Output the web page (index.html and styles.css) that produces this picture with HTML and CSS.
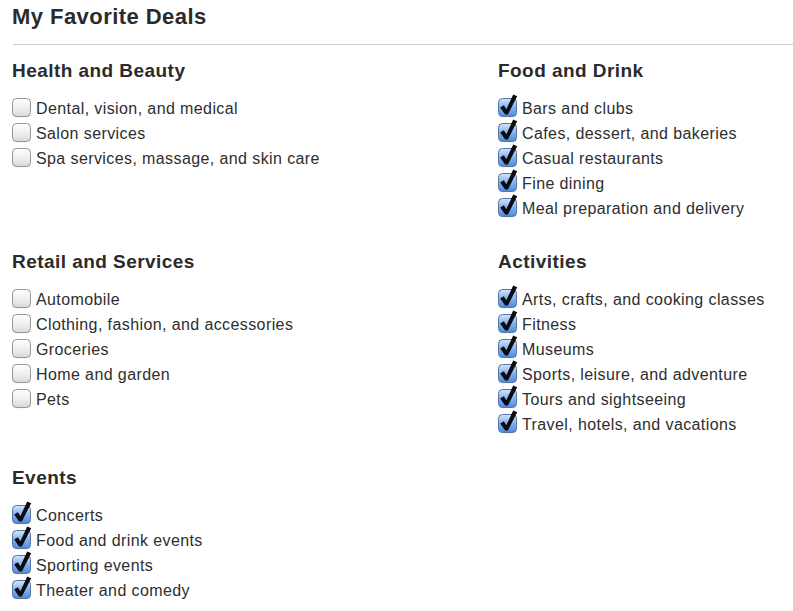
FILE: index.html
```html
<!DOCTYPE html>
<html>
<head>
<meta charset="utf-8">
<link rel="stylesheet" href="styles.css">
</head>
<body>
<svg width="0" height="0" class="defs" aria-hidden="true">
  <defs>
    <linearGradient id="gOff" x1="0" y1="0" x2="0" y2="1">
      <stop offset="0" stop-color="#ffffff"/>
      <stop offset="0.5" stop-color="#f0f0f0"/>
      <stop offset="1" stop-color="#d8d8d8"/>
    </linearGradient>
    <linearGradient id="gOn" x1="0" y1="0" x2="0" y2="1">
      <stop offset="0" stop-color="#d4e6fc"/>
      <stop offset="0.45" stop-color="#8ab6ef"/>
      <stop offset="1" stop-color="#4a8ae0"/>
    </linearGradient>
    <symbol id="off" viewBox="0 0 19 19" overflow="visible">
      <rect x="0.5" y="1.2" width="18" height="18" rx="4" fill="#000" opacity="0.1"/>
      <rect x="0.5" y="0.5" width="18" height="18" rx="4" fill="url(#gOff)" stroke="#959595"/>
    </symbol>
    <symbol id="on" viewBox="0 0 19 19" overflow="visible">
      <rect x="0.5" y="1.2" width="18" height="18" rx="4" fill="#000" opacity="0.12"/>
      <rect x="0.5" y="0.5" width="18" height="18" rx="4" fill="url(#gOn)" stroke="#5874a4"/>
      <path d="M2.2 9.6 L5.8 7.2 L8.4 11.2 L15.2 -3.6 L19.2 -1.8 L9.9 16.4 L7.1 16.4 Z" fill="#0b0b10"/>
    </symbol>
  </defs>
</svg>
<div class="page">
  <h1 class="title">My Favorite Deals</h1>
  <div class="rule"></div>
  <div class="grid">
    <section class="group">
      <h2 class="heading">Health and Beauty</h2>
      <ul class="list">
        <li class="item"><svg class="box" viewBox="0 0 19 19"><use href="#off"/></svg>Dental, vision, and medical</li>
        <li class="item"><svg class="box" viewBox="0 0 19 19"><use href="#off"/></svg>Salon services</li>
        <li class="item"><svg class="box" viewBox="0 0 19 19"><use href="#off"/></svg>Spa services, massage, and skin care</li>
      </ul>
    </section>
    <section class="group">
      <h2 class="heading">Food and Drink</h2>
      <ul class="list">
        <li class="item"><svg class="box" viewBox="0 0 19 19"><use href="#on"/></svg>Bars and clubs</li>
        <li class="item"><svg class="box" viewBox="0 0 19 19"><use href="#on"/></svg>Cafes, dessert, and bakeries</li>
        <li class="item"><svg class="box" viewBox="0 0 19 19"><use href="#on"/></svg>Casual restaurants</li>
        <li class="item"><svg class="box" viewBox="0 0 19 19"><use href="#on"/></svg>Fine dining</li>
        <li class="item"><svg class="box" viewBox="0 0 19 19"><use href="#on"/></svg>Meal preparation and delivery</li>
      </ul>
    </section>
    <section class="group">
      <h2 class="heading">Retail and Services</h2>
      <ul class="list">
        <li class="item"><svg class="box" viewBox="0 0 19 19"><use href="#off"/></svg>Automobile</li>
        <li class="item"><svg class="box" viewBox="0 0 19 19"><use href="#off"/></svg>Clothing, fashion, and accessories</li>
        <li class="item"><svg class="box" viewBox="0 0 19 19"><use href="#off"/></svg>Groceries</li>
        <li class="item"><svg class="box" viewBox="0 0 19 19"><use href="#off"/></svg>Home and garden</li>
        <li class="item"><svg class="box" viewBox="0 0 19 19"><use href="#off"/></svg>Pets</li>
      </ul>
    </section>
    <section class="group">
      <h2 class="heading">Activities</h2>
      <ul class="list">
        <li class="item"><svg class="box" viewBox="0 0 19 19"><use href="#on"/></svg>Arts, crafts, and cooking classes</li>
        <li class="item"><svg class="box" viewBox="0 0 19 19"><use href="#on"/></svg>Fitness</li>
        <li class="item"><svg class="box" viewBox="0 0 19 19"><use href="#on"/></svg>Museums</li>
        <li class="item"><svg class="box" viewBox="0 0 19 19"><use href="#on"/></svg>Sports, leisure, and adventure</li>
        <li class="item"><svg class="box" viewBox="0 0 19 19"><use href="#on"/></svg>Tours and sightseeing</li>
        <li class="item"><svg class="box" viewBox="0 0 19 19"><use href="#on"/></svg>Travel, hotels, and vacations</li>
      </ul>
    </section>
    <section class="group">
      <h2 class="heading">Events</h2>
      <ul class="list">
        <li class="item"><svg class="box" viewBox="0 0 19 19"><use href="#on"/></svg>Concerts</li>
        <li class="item"><svg class="box" viewBox="0 0 19 19"><use href="#on"/></svg>Food and drink events</li>
        <li class="item"><svg class="box" viewBox="0 0 19 19"><use href="#on"/></svg>Sporting events</li>
        <li class="item"><svg class="box" viewBox="0 0 19 19"><use href="#on"/></svg>Theater and comedy</li>
      </ul>
    </section>
  </div>
</div>
</body>
</html>
```

FILE: styles.css
```css
html, body {
  margin: 0;
  padding: 0;
  background: #ffffff;
}
body {
  font-family: "Liberation Sans", Arial, Helvetica, sans-serif;
  color: #2e2e2e;
}
.defs {
  position: absolute;
  width: 0;
  height: 0;
  overflow: hidden;
}
.page {
  padding: 3px 0 0 12px;
}
.title {
  margin: 0;
  font-size: 22px;
  line-height: 28px;
  font-weight: bold;
  letter-spacing: 0.45px;
  color: #2b2b2b;
}
.rule {
  margin: 13px 0 0 1px;
  height: 0;
  border-top: 1px solid #cfcfcf;
}
.grid {
  display: grid;
  grid-template-columns: 486px 1fr;
  row-gap: 30px;
  padding-top: 15px;
}
.heading {
  margin: 0 0 14px 0;
  font-size: 19px;
  line-height: 22px;
  font-weight: bold;
  letter-spacing: 0.45px;
  color: #2b2b2b;
}
.list {
  list-style: none;
  margin: 0;
  padding: 0;
}
.item {
  display: flex;
  align-items: center;
  height: 25px;
  font-size: 16px;
  letter-spacing: 0.4px;
  white-space: nowrap;
}
.box {
  width: 19px;
  height: 19px;
  margin: 0 5px 0 0;
  flex: none;
  overflow: visible;
  position: relative;
  top: -1px;
}
```
